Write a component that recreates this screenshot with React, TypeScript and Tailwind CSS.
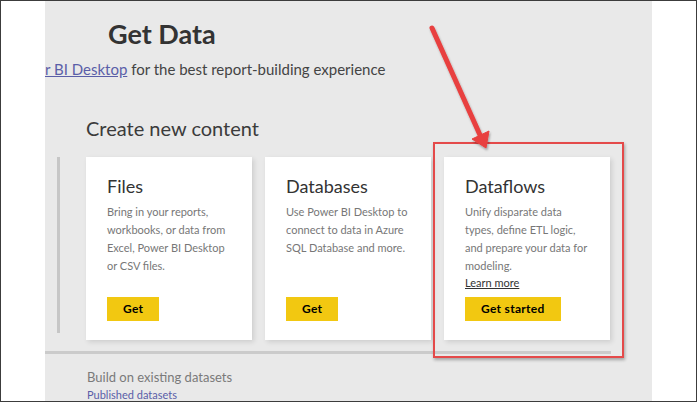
import React from 'react';

type Card = {
  title: string;
  lines: string[];
  learnMore?: boolean;
  action: string;
};

const cards: Card[] = [
  {
    title: 'Files',
    lines: ['Bring in your reports,', 'workbooks, or data from', 'Excel, Power BI Desktop', 'or CSV files.'],
    action: 'Get',
  },
  {
    title: 'Databases',
    lines: ['Use Power BI Desktop to', 'connect to data in Azure', 'SQL Database and more.'],
    action: 'Get',
  },
  {
    title: 'Dataflows',
    lines: ['Unify disparate data', 'types, define ETL logic,', 'and prepare your data for', 'modeling.'],
    learnMore: true,
    action: 'Get started',
  },
];

function ContentCard({ card }: { card: Card }) {
  return (
    <div className="w-[166px] h-[183px] bg-white shadow-[2px_2px_5px_rgba(0,0,0,0.12)] pl-[21px] pt-[17px] flex flex-col">
      <h3 className="text-[18px] leading-[24px] text-[#333]">{card.title}</h3>
      <div className="mt-[5px] h-[92px] flex flex-col">
        {card.lines.map((l) => (
          <p key={l} className="text-[11px] leading-[18px] text-[#777] whitespace-nowrap">{l}</p>
        ))}
        {card.learnMore && (
          <a className="text-[11px] leading-[16px] text-[#333] underline whitespace-nowrap">Learn more</a>
        )}
      </div>
      <div>
        <button className="h-[24px] px-[16px] bg-[#f2c811] text-[12px] font-bold text-black tracking-[0.3px]">
          {card.action}
        </button>
      </div>
    </div>
  );
}

export default function App() {
  return (
    <div className="relative w-[697px] h-[402px] border border-[#3c3c3c] bg-white flex overflow-hidden font-['Lato','Liberation_Sans',sans-serif]">
      <div className="w-[44px] shrink-0 bg-white" />

      <div className="w-[607px] shrink-0 bg-[#e9e9e9] overflow-hidden pt-[16px]">
        <h1 className="pl-[63px] text-[27px] leading-[34px] font-bold text-[#333]">Get Data</h1>
        <p className="mt-[8px] text-[15px] leading-[20px] text-[#444] whitespace-nowrap">
          <a className="text-[#5a5ea8] underline">r BI Desktop</a> for the best report-building experience
        </p>

        <h2 className="mt-[36px] pl-[41px] text-[20px] leading-[26px] text-[#3b3b3b]">Create new content</h2>

        <div className="mt-[16px] flex">
          <div className="ml-[12px] mr-[26px] w-[3px] h-[176px] bg-[#c6c6c6]" />
          <div className="flex gap-[13px]">
            {cards.map((c) => (
              <ContentCard key={c.title} card={c} />
            ))}
          </div>
        </div>

        <div className="mt-[11px] w-[566px] h-[3px] bg-[#cbcbcb]" />

        <p className="mt-[14px] pl-[42px] text-[13px] leading-[18px] text-[#7a7a7a]">Build on existing datasets</p>
        <a className="block mt-[1px] pl-[42px] text-[11px] leading-[16px] text-[#5a5ea8]">Published datasets</a>
      </div>

      <div className="flex-1 bg-white" />

      {/* annotation: red highlight box */}
      <div className="absolute left-[432px] top-[141px] w-[191px] h-[216px] border-2 border-[#e44a4a] shadow-[1px_2px_3px_rgba(0,0,0,0.3)]" />

      {/* annotation: arrow */}
      <svg className="absolute left-0 top-0" width="697" height="402" viewBox="0 0 697 402">
        <defs>
          <filter id="sh" x="-20%" y="-20%" width="140%" height="140%">
            <feDropShadow dx="1" dy="2" stdDeviation="1.2" floodColor="#000" floodOpacity="0.3" />
          </filter>
        </defs>
        <g filter="url(#sh)" fill="#e8403f" stroke="#e8403f">
          <line x1="431" y1="27" x2="479" y2="134" strokeWidth="5" strokeLinecap="round" />
          <polygon points="485,147 471,138 488,130" strokeWidth="1" strokeLinejoin="round" />
        </g>
      </svg>
    </div>
  );
}
